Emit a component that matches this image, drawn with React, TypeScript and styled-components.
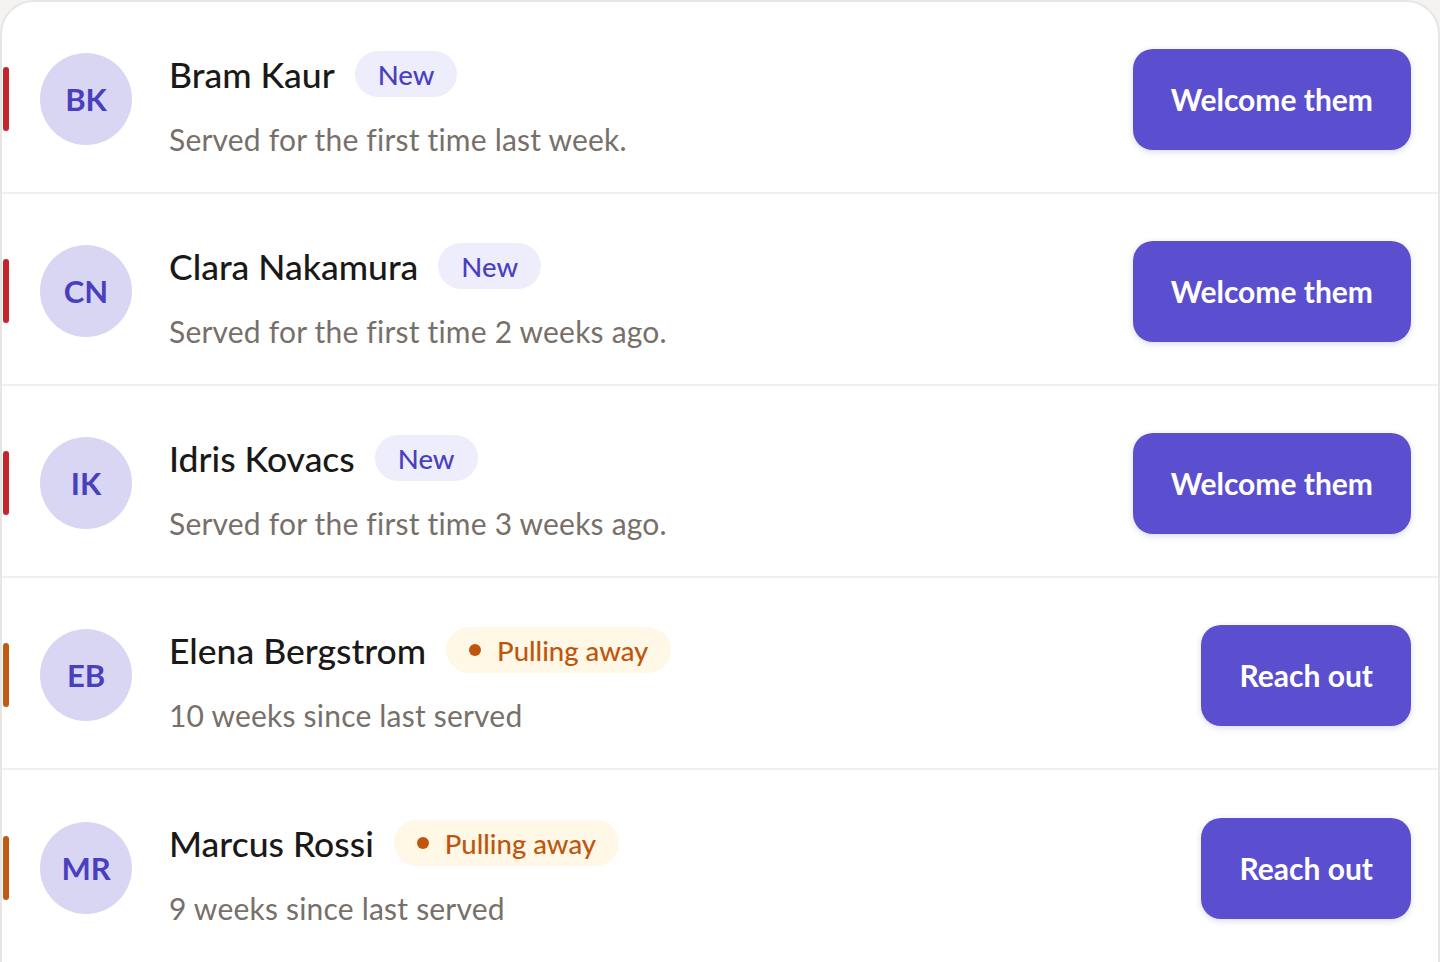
import React from 'react';
import styled, {createGlobalStyle} from 'styled-components';

const GlobalStyle = createGlobalStyle`
  html, body {
    margin: 0;
    padding: 0;
    background: #f4f3f1;
  }
  body {
    font-family: Lato, "Noto Sans", sans-serif;
    -webkit-font-smoothing: antialiased;
  }
`;

const Card = styled.div`
  box-sizing: border-box;
  height: 962px;
  background: #ffffff;
  border: 2px solid #e8e6e3;
  border-bottom: none;
  border-radius: 34px 34px 0 0;
  overflow: hidden;
`;

const Row = styled.div`
  box-sizing: border-box;
  height: 192px;
  display: flex;
  align-items: center;
  padding: 4px 27px 0 1px;
  border-bottom: 2px solid #f1efed;

  &:last-child {
    border-bottom: none;
  }
`;

const Accent = styled.div<{ tone: 'new' | 'away' }>`
  width: 6px;
  height: 64px;
  border-radius: 3px;
  background: ${p => p.tone === 'new' ? '#c4242c' : '#c05a12'};
  margin-right: 31px;
  flex-shrink: 0;
`;

const Avatar = styled.div`
  width: 92px;
  height: 92px;
  border-radius: 50%;
  background: #d9d6f4;
  color: #4a3fbd;
  font-size: 31px;
  font-weight: 700;
  display: flex;
  align-items: center;
  justify-content: center;
  flex-shrink: 0;
  margin-right: 37px;
`;

const Info = styled.div`
  flex: 1;
  display: flex;
  flex-direction: column;
  margin-top: 10px;
`;

const TitleLine = styled.div`
  display: flex;
  align-items: center;
  gap: 20px;
  height: 46px;
`;

const Name = styled.span`
  font-size: 35.5px;
  font-weight: 500;
  color: #1b1917;
`;

const Badge = styled.span<{ tone: 'new' | 'away' }>`
  display: inline-flex;
  align-items: center;
  gap: 16px;
  height: 46px;
  padding: 0 23px;
  border-radius: 23px;
  font-size: 27.5px;
  font-weight: 500;
  background: ${p => p.tone === 'new' ? '#eeedfb' : '#fff8e6'};
  color: ${p => p.tone === 'new' ? '#4a3fc0' : '#bf560e'};
`;

const Dot = styled.span`
  width: 12px;
  height: 12px;
  border-radius: 50%;
  background: #c0560e;
`;

const Subtitle = styled.div`
  margin-top: 24px;
  font-size: 30px;
  letter-spacing: 0.2px;
  line-height: 36px;
  color: #77706a;
`;

const ActionButton = styled.button`
  height: 101px;
  padding: 0 38px;
  border: none;
  border-radius: 20px;
  background: #5b4fcf;
  color: #ffffff;
  font-family: inherit;
  font-size: 30px;
  font-weight: 700;
  box-shadow: 0 2px 6px rgba(60, 50, 140, 0.18);
  cursor: pointer;
  flex-shrink: 0;
`;

interface Person {
    initials: string,
    name: string,
    tone: 'new' | 'away',
    detail: string,
}

const people: Person[] = [
    {initials: 'BK', name: 'Bram Kaur', tone: 'new', detail: 'Served for the first time last week.'},
    {initials: 'CN', name: 'Clara Nakamura', tone: 'new', detail: 'Served for the first time 2 weeks ago.'},
    {initials: 'IK', name: 'Idris Kovacs', tone: 'new', detail: 'Served for the first time 3 weeks ago.'},
    {initials: 'EB', name: 'Elena Bergstrom', tone: 'away', detail: '10 weeks since last served'},
    {initials: 'MR', name: 'Marcus Rossi', tone: 'away', detail: '9 weeks since last served'},
];

export default function App() {
    return (
        <>
            <GlobalStyle/>
            <Card>
                {people.map(person => (
                    <Row key={person.initials}>
                        <Accent tone={person.tone}/>
                        <Avatar>{person.initials}</Avatar>
                        <Info>
                            <TitleLine>
                                <Name>{person.name}</Name>
                                <Badge tone={person.tone}>
                                    {person.tone === 'away' && <Dot/>}
                                    {person.tone === 'new' ? 'New' : 'Pulling away'}
                                </Badge>
                            </TitleLine>
                            <Subtitle>{person.detail}</Subtitle>
                        </Info>
                        <ActionButton>
                            {person.tone === 'new' ? 'Welcome them' : 'Reach out'}
                        </ActionButton>
                    </Row>
                ))}
            </Card>
        </>
    );
}
